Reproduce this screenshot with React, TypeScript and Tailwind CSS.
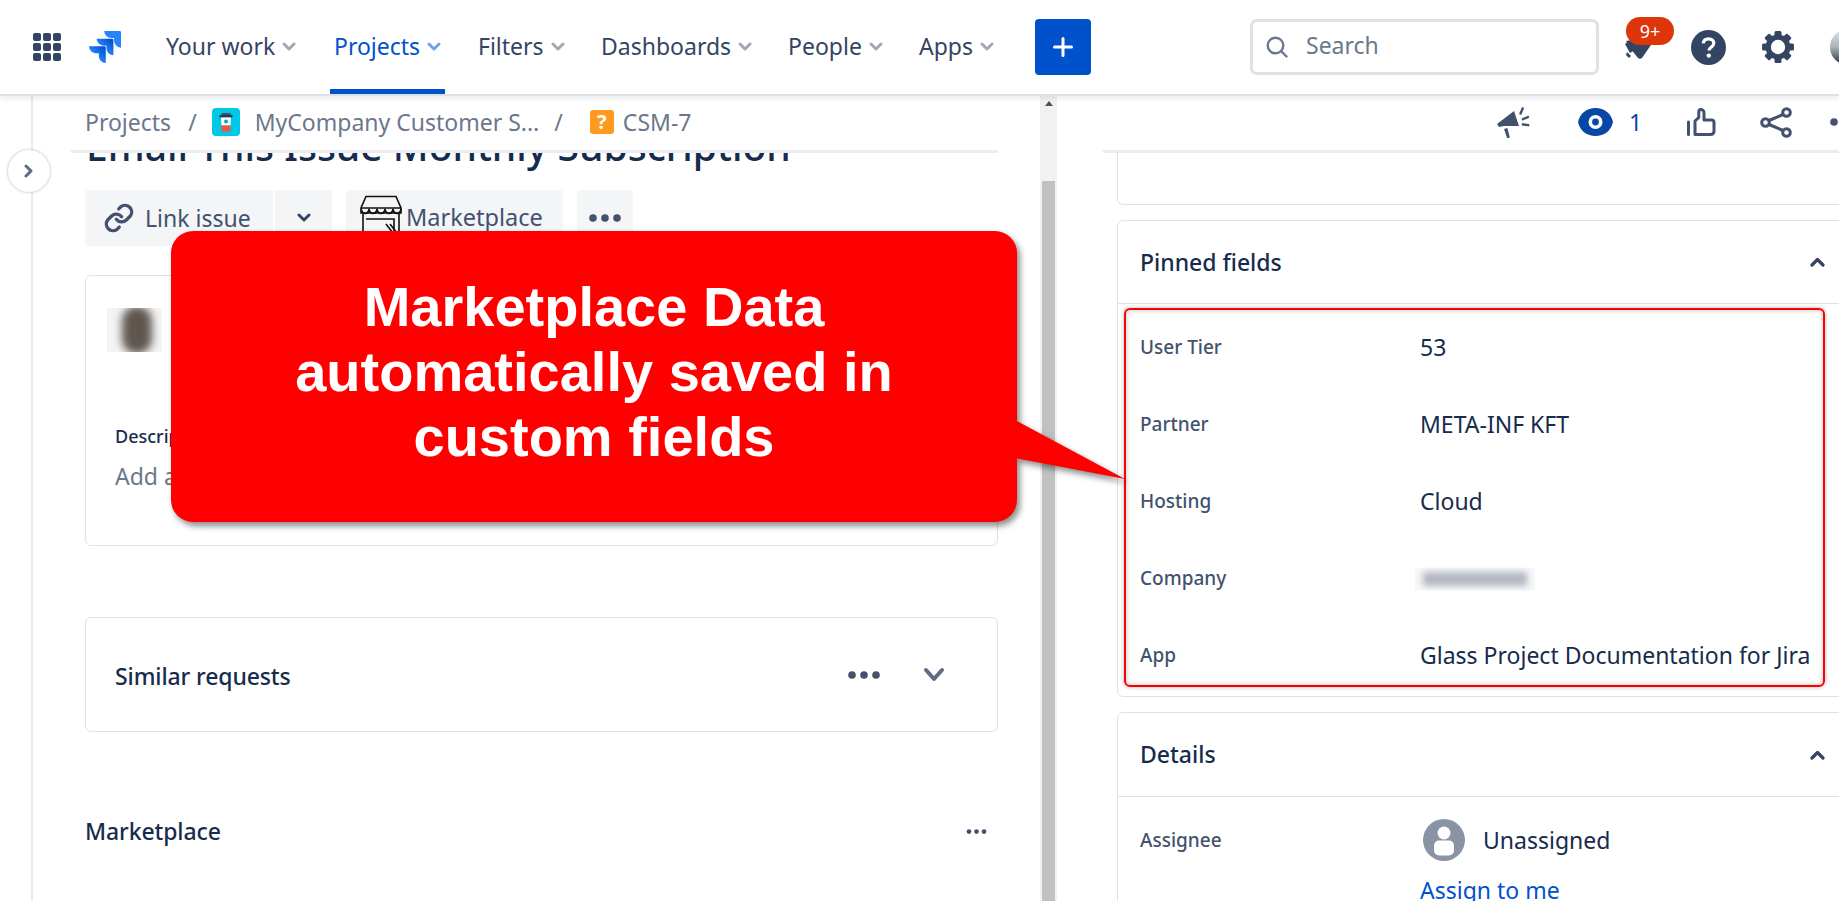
import React from "react";

const Chevron = ({ className = "" }: { className?: string }) => (
  <svg viewBox="0 0 14 10" className={`w-[14px] h-[10px] shrink-0 ${className}`} fill="none" stroke="currentColor" strokeWidth="3" strokeLinecap="round" strokeLinejoin="round">
    <path d="M2 2l5 5 5-5" />
  </svg>
);

const NavItem = ({ label, w, active = false }: { label: string; w: string; active?: boolean }) => (
  <div className={`${w} shrink-0 h-[94px] flex items-start`}>
    <div className={`h-[94px] flex items-center gap-[7px] pl-[4px] pr-[4px] ${active ? "border-b-[5px] border-[#0052cc] text-[#0052cc]" : "text-[#344563]"}`}>
      <span className={`text-[23px] leading-none pb-[2px] whitespace-nowrap ${active ? "pt-[5px]" : ""}`}>{label}</span>
      <Chevron className={`${active ? "text-[#74a1ea] mt-[5px]" : "text-[#a0a7b6]"}`} />
    </div>
  </div>
);

const Grid = () => (
  <svg viewBox="0 0 28 28" className="w-[28px] h-[28px] shrink-0" fill="#344563">
    {[0, 10, 20].map((y) => [0, 10, 20].map((x) => <rect key={`${x}-${y}`} x={x} y={y} width="8" height="8" rx="2" />))}
  </svg>
);

const Logo = () => (
  <svg viewBox="0 0 24 24" className="w-[32px] h-[32px] shrink-0">
    <defs>
      <linearGradient id="a" x1="0.9" y1="0.1" x2="0.4" y2="0.6"><stop offset="0" stopColor="#0052cc" /><stop offset="1" stopColor="#2684ff" /></linearGradient>
    </defs>
    <path fill="#2684ff" d="M23.013 0H11.455a5.215 5.215 0 0 0 5.215 5.215h2.129v2.057A5.215 5.215 0 0 0 24 12.483V1.005A1.001 1.001 0 0 0 23.013 0Z" />
    <path fill="url(#a)" d="M17.294 5.757H5.736a5.215 5.215 0 0 0 5.215 5.214h2.129v2.058a5.218 5.218 0 0 0 5.215 5.214V6.758a1.001 1.001 0 0 0-1.001-1.001z" />
    <path fill="url(#a)" d="M11.571 11.513H0a5.218 5.218 0 0 0 5.232 5.215h2.13v2.057A5.215 5.215 0 0 0 12.575 24V12.518a1.005 1.005 0 0 0-1.005-1.005z" />
  </svg>
);

const Gear = () => (
  <svg viewBox="0 0 32 32" className="w-[32px] h-[32px] shrink-0" fill="#344563">
    {[0, 45, 90, 135].map((r) => (
      <rect key={r} x="12.5" y="0" width="7" height="32" rx="1.5" transform={`rotate(${r} 16 16)`} />
    ))}
    <circle cx="16" cy="16" r="12.5" />
    <circle cx="16" cy="16" r="7.2" fill="#fff" />
  </svg>
);

const Help = () => (
  <svg viewBox="0 0 35 35" className="w-[35px] h-[35px] shrink-0">
    <circle cx="17.5" cy="17.5" r="17.5" fill="#344563" />
    <path d="M12.2 13.4c.3-3 2.5-4.6 5.4-4.6 3 0 5.2 1.8 5.2 4.3 0 2-1 3-2.5 4-1.3.9-2.3 1.5-2.3 3.4" fill="none" stroke="#fff" strokeWidth="3.2" />
    <circle cx="17.8" cy="25.6" r="2.2" fill="#fff" />
  </svg>
);

const Bell = () => (
  <svg viewBox="0 0 30 22" className="w-[30px] h-[22px] shrink-0" fill="#344563">
    <path d="M2 2L14 0l15 3-11 16c-1 1-3 1-4 0L6 9z" />
    <path d="M1 5l3-2 5 9-3 2z" />
    <path d="M3 13l4 4-2 2-3-3z" />
  </svg>
);

const Coffee = () => (
  <svg viewBox="0 0 28 28" className="w-[28px] h-[28px] shrink-0">
    <rect width="28" height="28" rx="4" fill="#00c7e6" />
    <path d="M7.5 7h13v2.5h-13z" fill="#253858" />
    <path d="M9.5 5h9v2h-9z" fill="#42526e" />
    <path d="M9 9.5h10l-.4 8H9.4z" fill="#fff" />
    <path d="M9.4 17.5h9.2l-.5 6H9.9z" fill="#f4533c" />
    <circle cx="14" cy="13.5" r="2" fill="#0aa5c2" />
  </svg>
);

const Store = () => (
  <svg viewBox="0 0 42 46" className="w-[42px] h-[46px] shrink-0" fill="none" stroke="#111" strokeWidth="1.6">
    <path d="M6 1.5h30l5 11.5v5H1v-5z" />
    <path d="M1 13h40" />
    <path d="M1 14c2 6 7 6 8 0 1 6 7 6 8 0 1 6 7 6 8 0 1 6 7 6 8 0 1 6 7 6 8 0" />
    <path d="M3 19v27M39 19v27" />
    <path d="M6 24h28v22" />
    <path d="M26 29l10 13M30 29l7 9" />
  </svg>
);

const Megaphone = () => (
  <svg viewBox="0 0 34 33" className="w-[34px] h-[33px] shrink-0" fill="#42526e">
    <path d="M0 18L17 5l5 15H7l-5 1z" />
    <path d="M7 23l3.4-1 2.4 9.4-2.6.8z" />
    <path d="M22 8l3-7 2.2 1-3 7z M24.5 12.5l7-3 .8 2.2-7 3z M25 17l7.5 1.2-.4 2.4-7.5-1.2z" />
  </svg>
);

const Eye = () => (
  <svg viewBox="0 0 35 28" className="w-[35px] h-[28px] shrink-0">
    <path d="M0 14C2 5 9 0 17.5 0S33 5 35 14c-2 9-9 14-17.5 14S2 23 0 14z" fill="#0747a6" />
    <circle cx="17.5" cy="14" r="7" fill="#fff" />
    <circle cx="17.5" cy="14" r="3.4" fill="#0747a6" />
  </svg>
);

const Thumb = () => (
  <svg viewBox="0 0 29 28" className="w-[29px] h-[28px] shrink-0" fill="none" stroke="#42526e" strokeWidth="3" strokeLinejoin="round" strokeLinecap="round">
    <path d="M1.5 14v12.5" />
    <path d="M8 26.5h15.5c2 0 3.5-1.2 3.5-3.2V14.5c0-1.6-1.2-2.5-2.6-2.5H17V5c0-2-1.4-3.5-3.2-3.5-1.2 0-2 .8-2 2v6L8 13z" />
  </svg>
);

const Share = () => (
  <svg viewBox="0 0 32 31" className="w-[32px] h-[31px] shrink-0" fill="none" stroke="#42526e" strokeWidth="3">
    <circle cx="26.5" cy="5.5" r="3.8" />
    <circle cx="26.5" cy="25.5" r="3.8" />
    <circle cx="5.5" cy="15.5" r="3.8" />
    <path d="M9 13.5L23 7.5M9 17.5L23 23.5" />
  </svg>
);

const Dots = ({ big = true }: { big?: boolean }) => (
  <svg viewBox="0 0 32 8" className={`shrink-0 ${big ? "w-[32px] h-[8px]" : "w-[21px] h-[5px]"}`} fill="#42526e">
    <circle cx="4" cy="4" r="3.8" />
    <circle cx="16" cy="4" r="3.8" />
    <circle cx="28" cy="4" r="3.8" />
  </svg>
);

const UpChevron = () => (
  <svg viewBox="0 0 15 10" className="w-[15px] h-[10px] shrink-0" fill="none" stroke="#344563" strokeWidth="3.2" strokeLinecap="round" strokeLinejoin="round">
    <path d="M2 8l5.5-5.5L13 8" />
  </svg>
);

const LinkIcon = () => (
  <svg viewBox="0 0 24 24" className="w-[32px] h-[32px] shrink-0" fill="none" stroke="#42526e" strokeWidth="2.5" strokeLinecap="round" strokeLinejoin="round">
    <path d="M10 13a5 5 0 0 0 7.5.5l3-3a5 5 0 0 0-7-7l-1.7 1.7" />
    <path d="M14 11a5 5 0 0 0-7.5-.5l-3 3a5 5 0 0 0 7 7l1.7-1.7" />
  </svg>
);

const rows: [string, React.ReactNode][] = [
  ["User Tier", "53"],
  ["Partner", "META-INF KFT"],
  ["Hosting", "Cloud"],
  ["Company", <div key="b" className="-ml-[5px] w-[120px] h-[22px] bg-[#f6f7f8] flex items-center justify-center"><div className="w-[104px] h-[14px] bg-[#b3b8c2] blur-[3px]" /></div>],
  ["App", "Glass Project Documentation for Jira"],
];

export default function App() {
  return (
    <div className="relative w-[1839px] h-[901px] overflow-hidden bg-white flex flex-col font-['Noto_Sans','Open_Sans',sans-serif] text-[#172b4d]">
      {/* Top navigation */}
      <header className="relative z-20 h-[94px] shrink-0 bg-white flex items-center overflow-x-clip shadow-[0_2px_0_#dfe1e6,0_4px_6px_rgba(9,30,66,0.10)]">
        <div className="ml-[33px] shrink-0"><Grid /></div>
        <div className="ml-[28px] shrink-0"><Logo /></div>
        <nav className="ml-[41px] flex shrink-0">
          <NavItem label="Your work" w="w-[168px]" />
          <NavItem label="Projects" w="w-[144px]" active />
          <NavItem label="Filters" w="w-[123px]" />
          <NavItem label="Dashboards" w="w-[187px]" />
          <NavItem label="People" w="w-[131px]" />
          <NavItem label="Apps" w="w-[120px]" />
        </nav>
        <button className="shrink-0 w-[56px] h-[56px] rounded-[4px] bg-[#0052cc] flex items-center justify-center">
          <svg viewBox="0 0 20 20" className="w-[20px] h-[20px]" stroke="#fff" strokeWidth="3" strokeLinecap="round"><path d="M10 1.5v17M1.5 10h17" /></svg>
        </button>
        <div className="shrink-0 ml-[159px] w-[349px] h-[56px] rounded-[7px] border-[3px] border-[#dfe1e6] flex items-center pl-[13px]">
          <svg viewBox="0 0 22 22" className="w-[22px] h-[22px] shrink-0" fill="none" stroke="#6b778c" strokeWidth="2.4" strokeLinecap="round"><circle cx="9.5" cy="9.5" r="7.8" /><path d="M15.5 15.5l5 5" /></svg>
          <span className="ml-[18px] pb-[3px] text-[23px] leading-none text-[#6b778c]">Search</span>
        </div>
        <div className="shrink-0 relative ml-[25px] w-[50px] h-[56px] flex items-end pb-[14px]">
          <Bell />
          <span className="absolute left-[2px] top-[-2px] w-[48px] h-[28px] rounded-full bg-[#de350b] text-white text-[18px] leading-[28px] text-center">9+</span>
        </div>
        <div className="ml-[17px] shrink-0"><Help /></div>
        <div className="ml-[36px] shrink-0"><Gear /></div>
        <div className="ml-[36px] w-[36px] h-[36px] rounded-full shrink-0 bg-gradient-to-b from-[#dfe6e8] via-[#a9b4b8] to-[#2d3236]" />
      </header>

      {/* Body */}
      <div className="flex flex-1 min-h-0">
        <div className="w-[33px] shrink-0 border-r-2 border-[#ebecf0]" />

        <main className="w-[1007px] shrink-0 flex flex-col min-h-0">
          <div className="relative z-10 ml-[38px] mr-[42px] h-[59px] shrink-0 pl-[14px] flex items-center bg-white border-b-[3px] border-[#ebecf0] text-[#6b778c] text-[23px] whitespace-nowrap">
            <span>Projects</span>
            <span className="ml-[17px]">/</span>
            <span className="ml-[15px]"><Coffee /></span>
            <span className="ml-[15px]">MyCompany Customer S...</span>
            <span className="ml-[15px]">/</span>
            <span className="ml-[27px] w-[24px] h-[24px] rounded-[3px] bg-[#ff991f] text-white text-[20px] font-bold leading-[24px] text-center">?</span>
            <span className="ml-[9px]">CSM-7</span>
          </div>

          <div className="flex-1 min-h-0 overflow-hidden pl-[52px] pr-[42px]">
            <h1 className="mt-[-29px] h-[44px] text-[39px] leading-[44px] font-medium whitespace-nowrap pl-[1px]">Email This Issue Monthly Subscription</h1>

            <div className="mt-[22px] flex gap-[14px] h-[56px]">
              <div className="w-[247px] rounded-[4px] bg-[#f4f5f7] flex items-center text-[#42526e]">
                <div className="w-[190px] h-full flex items-center pl-[18px] gap-[10px] border-r-2 border-white">
                  <LinkIcon />
                  <span className="text-[23px] whitespace-nowrap">Link issue</span>
                </div>
                <Chevron className="ml-[22px] text-[#344563]" />
              </div>
              <div className="w-[217px] rounded-[4px] bg-[#f4f5f7] flex items-center text-[#42526e] pl-[14px] gap-[4px]">
                <Store />
                <span className="text-[23.5px]">Marketplace</span>
              </div>
              <div className="w-[56px] rounded-[4px] bg-[#f4f5f7] flex items-center justify-center"><Dots /></div>
            </div>

            <section className="mt-[29px] h-[271px] rounded-[6px] border border-[#dfe1e6] pt-[32px] pl-[21px]">
              <div className="relative w-[55px] h-[44px] overflow-hidden bg-[#f4f4f4]">
                <div className="absolute left-[15px] top-[-2px] w-[30px] h-[48px] rounded-full bg-[#5f5650] blur-[4px]" />
              </div>
              <p className="ml-[8px] mt-[72px] text-[18px] font-medium leading-[24px]">Description</p>
              <p className="ml-[8px] mt-[16px] text-[23px] leading-[24px] text-[#6b778c]">Add a description...</p>
            </section>

            <section className="mt-[71px] h-[115px] rounded-[6px] border border-[#dfe1e6] flex items-center pl-[29px] pr-[52px]">
              <span className="pt-[3px] text-[23px] font-medium tracking-[-0.005em] text-[#172b4d]">Similar requests</span>
              <span className="ml-auto"><Dots /></span>
              <span className="ml-[43px]"><svg viewBox="0 0 22 16" className="w-[22px] h-[16px]" fill="none" stroke="#5e6c84" strokeWidth="4" strokeLinecap="round" strokeLinejoin="round"><path d="M3 3l8 9 8-9" /></svg></span>
            </section>

            <div className="mt-[79px] h-[40px] flex items-center pr-[11px]">
              <span className="text-[23px] font-medium tracking-[-0.005em]">Marketplace</span>
              <span className="ml-auto"><Dots big={false} /></span>
            </div>
          </div>
        </main>

        {/* Scrollbar */}
        <div className="w-[17px] shrink-0 bg-[#f1f1f1] flex flex-col items-center">
          <svg viewBox="0 0 8 5" className="mt-[7px] w-[8px] h-[5px]" fill="#505050"><path d="M4 0l4 5H0z" /></svg>
          <div className="mt-[75px] w-[13px] flex-1 bg-[#c1c1c1]" />
        </div>

        {/* Right column */}
        <aside className="flex-1 min-w-0 overflow-hidden pl-[46px] flex flex-col">
          <div className="h-[59px] shrink-0 border-b-[3px] border-[#ebecf0] flex items-center pl-[394px] whitespace-nowrap">
            <Megaphone />
            <span className="ml-[47px]"><Eye /></span>
            <span className="ml-[16px] text-[23px] leading-none text-[#0747a6]">1</span>
            <span className="ml-[45px]"><Thumb /></span>
            <span className="ml-[44px]"><Share /></span>
            <span className="ml-[38px]"><Dots /></span>
          </div>
          <div className="pl-[14px] w-[754px] shrink-0">
            <div className="h-[52px] rounded-b-[6px] border border-t-0 border-[#dfe1e6]" />
            <section className="mt-[15px] h-[477px] rounded-[6px] border border-[#dfe1e6]">
              <div className="h-[83px] border-b border-[#dfe1e6] flex items-center justify-between pl-[22px] pr-[31px]">
                <span className="text-[23px] font-medium">Pinned fields</span>
                <UpChevron />
              </div>
              <div className="pt-[5px]">
                {rows.map(([k, v]) => (
                  <div key={k} className="h-[77px] grid grid-cols-[280px_1fr] items-center pl-[22px]">
                    <span className="text-[19px] font-medium text-[#42526e]">{k}</span>
                    <div className="text-[23px] whitespace-nowrap">{v}</div>
                  </div>
                ))}
              </div>
            </section>
            <section className="mt-[15px] h-[300px] rounded-[6px] border border-[#dfe1e6]">
              <div className="h-[84px] border-b border-[#dfe1e6] flex items-center justify-between pl-[22px] pr-[31px]">
                <span className="text-[23px] font-medium">Details</span>
                <UpChevron />
              </div>
              <div className="grid grid-cols-[280px_1fr] pl-[22px] pt-[22px]">
                <span className="text-[19px] font-medium text-[#42526e] leading-[42px]">Assignee</span>
                <div>
                  <div className="flex items-center gap-[18px] pl-[3px]">
                    <svg viewBox="0 0 42 42" className="w-[42px] h-[42px] shrink-0"><circle cx="21" cy="21" r="21" fill="#8993a4" /><circle cx="21" cy="14" r="6.5" fill="#fff" /><rect x="11" y="21.5" width="20" height="15" rx="5" fill="#fff" /></svg>
                    <span className="text-[23px]">Unassigned</span>
                  </div>
                  <div className="mt-[13px] text-[23px] text-[#0052cc] leading-[32px]">Assign to me</div>
                </div>
              </div>
            </section>
          </div>
        </aside>
      </div>

      {/* Collapse toggle */}
      <button className="absolute z-10 left-[8px] top-[150px] w-[42px] h-[42px] rounded-full bg-white shadow-[0_0_3px_rgba(9,30,66,0.35)] flex items-center justify-center">
        <svg viewBox="0 0 10 14" className="w-[10px] h-[14px]" fill="none" stroke="#5e6c84" strokeWidth="3" strokeLinecap="round" strokeLinejoin="round"><path d="M2 2l5 5-5 5" /></svg>
      </button>

      {/* Red highlight box */}
      <div className="absolute z-10 left-[1124px] top-[308px] w-[701px] h-[379px] rounded-[6px] border-[2.5px] border-[#f00] shadow-[0_0_4px_rgba(0,0,0,0.3),inset_0_0_5px_rgba(0,0,0,0.25)]" />

      {/* Callout */}
      <div className="absolute z-30 left-[171px] top-[231px] w-[846px] h-[291px] drop-shadow-[3px_4px_3px_rgba(0,0,0,0.45)]">
        <svg viewBox="0 0 110 60" className="absolute left-[844px] top-[189px] w-[110px] h-[60px]"><path d="M0 0L110 59 0 38z" fill="#f00" /></svg>
        <div className="w-full h-full rounded-[22px] bg-[#f00] pt-[43px] text-center text-white font-['Liberation_Sans',sans-serif] font-bold text-[56px] leading-[65px]">
          Marketplace Data<br />automatically saved in<br />custom fields
        </div>
      </div>
    </div>
  );
}
